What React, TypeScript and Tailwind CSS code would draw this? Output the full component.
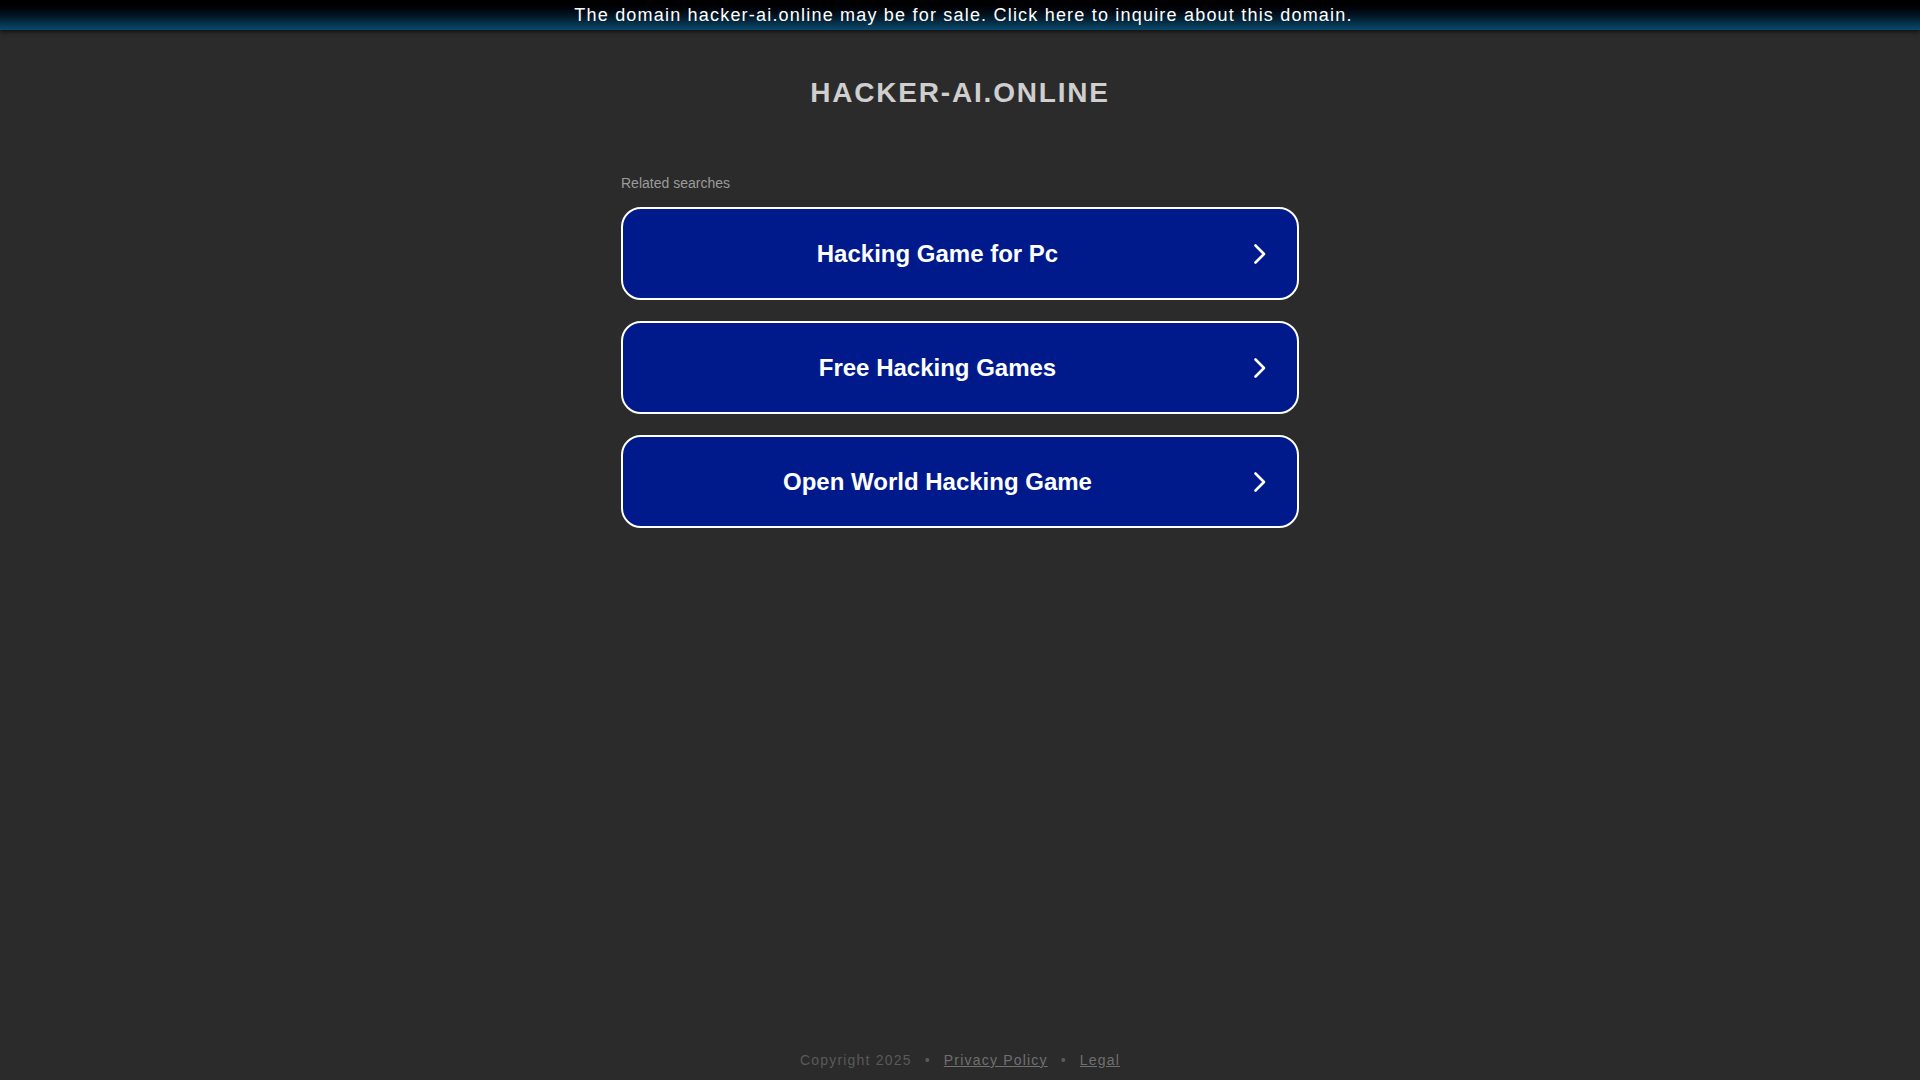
import React from "react";

const searches = ["Hacking Game for Pc", "Free Hacking Games", "Open World Hacking Game"];

const Chevron: React.FC = () => (
  <svg width="14" height="22" viewBox="0 0 14 22" fill="none" className="shrink-0">
    <path d="M2.5 2.5 L11 11 L2.5 19.5" stroke="white" strokeWidth="2.6" strokeLinecap="round" strokeLinejoin="round" />
  </svg>
);

const App: React.FC = () => {
  return (
    <div className="min-h-screen flex flex-col bg-[#2b2b2b] font-['Liberation_Sans',Arial,sans-serif]">
      <div className="h-[30px] flex items-center justify-center pl-[7px] bg-gradient-to-b from-[#000000] via-[#021422] to-[#0a4a6d] shadow-[0_2px_4px_rgba(0,0,0,0.6)] text-white text-[18px] tracking-[1.2px]">
        The domain hacker-ai.online may be for sale. Click here to inquire about this domain.
      </div>

      <div className="flex flex-col items-center flex-1">
        <h1 className="mt-[47px] text-[28px] leading-[32px] font-bold tracking-[1.8px] text-[#cfcfcf]">
          HACKER-AI.ONLINE
        </h1>

        <div className="w-[678px] mt-[66px]">
          <div className="text-[14px] leading-[16px] text-[#9b9b9b]">Related searches</div>
          <div className="mt-[16px] flex flex-col gap-[21px]">
            {searches.map((s) => (
              <div
                key={s}
                className="h-[93px] flex items-center rounded-[20px] border-2 border-white bg-[#001a8b] pl-[33px] pr-[30px]"
              >
                <span className="flex-1 text-center text-white text-[24px] font-bold">{s}</span>
                <span className="ml-[34px]">
                  <Chevron />
                </span>
              </div>
            ))}
          </div>
        </div>
      </div>

      <div className="flex items-center justify-center gap-[13px] pb-[9px] text-[14px] tracking-[1.2px] text-[#5a5a5a]">
        <span>Copyright 2025</span>
        <span>•</span>
        <span className="underline text-[#707070]">Privacy Policy</span>
        <span>•</span>
        <span className="underline text-[#707070]">Legal</span>
      </div>
    </div>
  );
};

export default App;
